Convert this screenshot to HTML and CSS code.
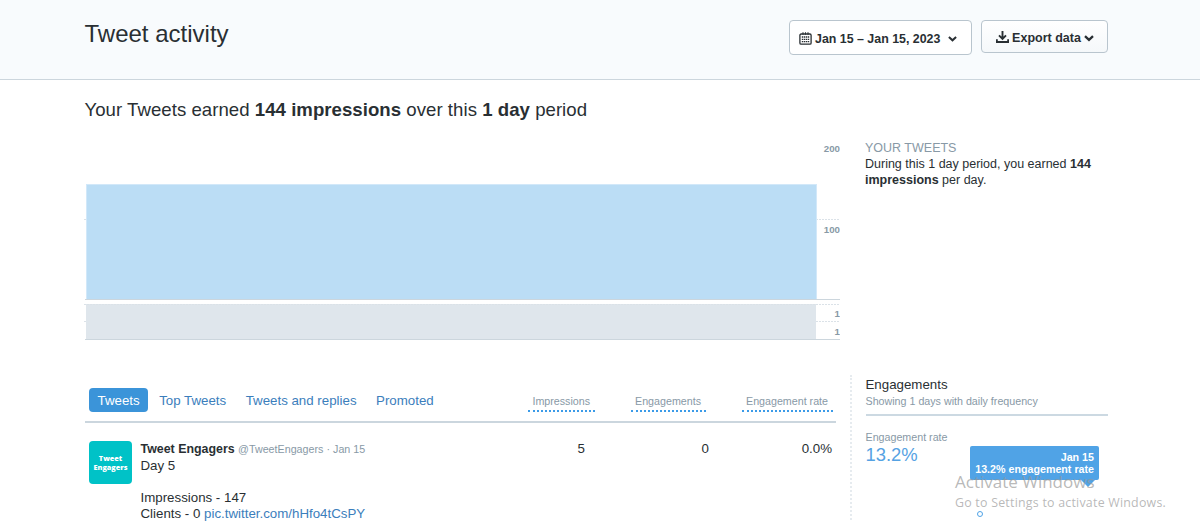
FILE: index.html
```
<!DOCTYPE html>
<html lang="en">

<head>
  <meta charset="UTF-8">
  <meta name="viewport" content="width=device-width, initial-scale=1.0">
  <title>Tweet activity</title>
  <link rel="stylesheet" href="styles.css">
</head>

<body>
  <header class="page-header">
    <div class="wrapper header-row">
      <h1>Tweet activity</h1>
      <div class="header-buttons">
        <button class="btn date-btn">
          <svg class="icon-calendar" width="13" height="13" viewBox="0 0 13 13" fill="none" stroke="#292f33">
            <rect x="0.9" y="2" width="11.2" height="10.2" rx="1.2" stroke-width="1.3" />
            <path d="M4 0.3v2.4M6.5 0.3v2.4M9 0.3v2.4" stroke-width="1.1" />
            <path d="M2.8 5h7.4M2.8 7.3h7.4M2.8 9.6h7.4" stroke-width="1.3" stroke-dasharray="1.4 0.6" />
          </svg>
          <span>Jan 15 – Jan 15, 2023</span>
          <svg class="chevron" width="9" height="6" viewBox="0 0 9 6" fill="none" stroke="#292f33" stroke-width="2">
            <path d="M0.9 1l3.6 3.3L8.1 1" />
          </svg>
        </button>
        <button class="btn export-btn">
          <svg class="icon-download" width="13" height="12" viewBox="0 0 13 12" fill="none" stroke="#292f33">
            <path d="M6.5 0v7.5M3 4.3l3.5 3.5L10 4.3" stroke-width="1.9" />
            <path d="M0.9 8.2V11h11.2V8.2" stroke-width="1.8" />
          </svg>
          <span>Export data</span>
          <svg class="chevron" width="10" height="7" viewBox="0 0 10 7" fill="none" stroke="#292f33" stroke-width="2.3">
            <path d="M1 1.2l4 3.7 4-3.7" />
          </svg>
        </button>
      </div>
    </div>
  </header>

  <main class="wrapper">
    <h2>Your Tweets earned <b>144 impressions</b> over this <b>1 day</b> period</h2>

    <section class="overview">
      <svg class="chart" width="756" height="204" viewBox="0 0 756 204">
        <!-- impressions -->
        <path class="grid-line" d="M0 82.5H756" />
        <rect x="2" y="47" width="731" height="116" fill="#d2e8f9" />
        <rect x="3" y="48" width="729" height="115" fill="#bbddf5" />
        <path class="axis-line" d="M1 162.5H756" />
        <!-- tweets -->
        <rect x="2" y="167" width="730" height="36" fill="#dfe6ec" />
        <path class="grid-line" d="M0 167.5H756M732 184.5H756M0 184.5H2" />
        <path class="axis-line" d="M1 202.5H756" />
        <g class="ticks">
          <text x="756" y="15">200</text>
          <text x="756" y="96">100</text>
          <text x="756" y="180">1</text>
          <text x="756" y="198">1</text>
        </g>
      </svg>
      <div class="overview-text">
        <h3>YOUR TWEETS</h3>
        <p>During this 1 day period, you earned <b>144 impressions</b> per day.</p>
      </div>
    </section>

    <section class="details">
      <div class="tweets">
        <div class="tweets-head">
          <nav class="tabs">
            <a class="tab active">Tweets</a>
            <a class="tab">Top Tweets</a>
            <a class="tab">Tweets and replies</a>
            <a class="tab">Promoted</a>
          </nav>
          <div class="columns">
            <span class="column">Impressions</span>
            <span class="column">Engagements</span>
            <span class="column">Engagement rate</span>
          </div>
        </div>
        <article class="tweet">
          <div class="avatar">Tweet<br>Engagers</div>
          <div class="tweet-body">
            <div class="tweet-meta"><b>Tweet Engagers</b> <span>@TweetEngagers · Jan 15</span></div>
            <p>Day 5</p>
            <p class="tweet-stats">Impressions - 147<br>Clients - 0 <a>pic.twitter.com/hHfo4tCsPY</a></p>
          </div>
          <div class="metrics">
            <span>5</span>
            <span>0</span>
            <span>0.0%</span>
          </div>
        </article>
      </div>

      <aside class="engagements">
        <h3>Engagements</h3>
        <p class="muted frequency">Showing 1 days with daily frequency</p>
        <p class="muted">Engagement rate</p>
        <div class="rate">13.2%</div>
        <span class="point"></span>
        <div class="tooltip">Jan 15<br>13.2% engagement rate</div>
      </aside>
    </section>
  </main>

  <div class="watermark">
    <div class="watermark-title">Activate Windows</div>
    <div class="watermark-text">Go to Settings to activate Windows.</div>
  </div>
</body>

</html>
```
FILE: styles.css
```
* {
  box-sizing: border-box;
}

body {
  margin: 0;
  height: 522px;
  overflow: hidden;
  position: relative;
  font-family: "Liberation Sans", Arial, sans-serif;
  color: #292f33;
  background-color: #fff;
}

h1,
h2,
h3,
p {
  margin: 0;
  font-weight: normal;
}

.wrapper {
  width: 1024px;
  margin-left: 84px;
}

.page-header {
  height: 80px;
  background-color: #f8fbfd;
  border-bottom: 1px solid #ccd6dd;
}

.header-row {
  display: flex;
  justify-content: space-between;
  align-items: flex-start;
  padding-top: 20px;
}

h1 {
  padding-left: 0.5px;
  font-size: 24px;
  line-height: 28px;
}

.header-buttons {
  display: flex;
  align-items: flex-start;
  gap: 9px;
}

.btn {
  display: flex;
  align-items: center;
  padding: 0;
  border: 1px solid #b9c5ce;
  border-radius: 4px;
  font-family: inherit;
  font-size: 12.4px;
  font-weight: bold;
  color: #292f33;
}

.date-btn {
  width: 183px;
  height: 35px;
  padding: 3px 0 0 9px;
  background-color: #fff;
}

.date-btn .icon-calendar {
  margin-top: -2px;
}

.date-btn span {
  margin: 0 8px 0 3px;
}

.export-btn {
  width: 127px;
  height: 33px;
  padding: 3px 0 0 1px;
  justify-content: center;
  gap: 3px;
  font-size: 12.5px;
  background: linear-gradient(#fff, #f5f8fa);
}

.export-btn .icon-download {
  margin-top: -2px;
}

h2 {
  padding: 19px 0 0 0.5px;
  font-size: 18.6px;
  line-height: 22px;
  letter-spacing: 0.04px;
}

.overview {
  display: flex;
  gap: 25px;
  padding-top: 16px;
  height: 254px;
}

.chart {
  flex: none;
}

.grid-line {
  stroke: #dbe2e8;
  stroke-dasharray: 2 1;
}

.axis-line {
  stroke: #ccd6dd;
}

.ticks text {
  font-size: 9.7px;
  font-weight: bold;
  fill: #8899a6;
  text-anchor: end;
}

.overview-text {
  width: 240px;
  padding-top: 3px;
  font-size: 12.5px;
  line-height: 16px;
}

.overview-text h3 {
  font-size: 12.5px;
  color: #8899a6;
}

.details {
  display: flex;
  height: 145px;
}

.tweets {
  width: 768px;
  padding: 0 14px 0 1px;
  border-right: 2px dotted #e6ebef;
}

.tweets-head {
  display: flex;
  justify-content: space-between;
  height: 48px;
  padding: 13px 3.5px 0 4px;
  border-bottom: 2px solid #cbd6de;
}

.tabs {
  display: flex;
  gap: 2.5px;
}

.tab {
  height: 24px;
  padding: 0 8.5px;
  font-size: 13.3px;
  line-height: 25px;
  border-radius: 4px;
  color: #3b7ebc;
}

.tab.active {
  background-color: #3b94d9;
  color: #fff;
}

.columns {
  display: flex;
  align-items: flex-start;
  gap: 36px;
  padding-top: 6px;
}

.column {
  height: 18px;
  padding: 0 4.5px;
  font-size: 10.7px;
  line-height: 14px;
  color: #8899a6;
  border-bottom: 2px dotted #3b9be8;
}

.tweet {
  display: flex;
  padding: 18px 4px 0 4px;
  font-size: 13.3px;
  line-height: 16px;
}

.avatar {
  width: 43px;
  height: 43px;
  padding-top: 13px;
  border-radius: 4px;
  background-color: #00c2c7;
  color: #fff;
  font-family: "Open Sans", sans-serif;
  font-size: 7.3px;
  font-weight: 800;
  line-height: 8.5px;
  text-align: center;
}

.tweet-body {
  width: 350px;
  padding-left: 8.5px;
}

.tweet-meta {
  font-size: 12.4px;
  line-height: 17px;
}

.tweet-meta span {
  font-size: 10.7px;
  letter-spacing: 0.02px;
  color: #8899a6;
}

.tweet-stats {
  padding-top: 16px;
}

.tweet-body a {
  color: #3b7ebc;
}

.metrics {
  flex: 1;
  display: grid;
  grid-template-columns: 103px 124px 1fr;
  text-align: right;
}

.engagements {
  position: relative;
  width: 256px;
  padding: 1px 0 0 13.5px;
}

.engagements h3 {
  font-size: 13.3px;
  line-height: 18px;
}

.muted {
  font-size: 10.7px;
  line-height: 14px;
  color: #8899a6;
}

.frequency {
  height: 22px;
  line-height: 15px;
  margin-bottom: 14px;
  border-bottom: 2px solid #ccd9e2;
}

.rate {
  font-size: 18.4px;
  line-height: 22px;
  color: #55a2e3;
}

.tooltip {
  position: absolute;
  top: 71px;
  right: 9px;
  width: 129px;
  height: 34px;
  padding: 5px 5px 0 0;
  border-radius: 2px;
  background-color: #50a3e6;
  color: #fff;
  font-size: 10.7px;
  font-weight: bold;
  line-height: 12px;
  text-align: right;
  white-space: nowrap;
}

.tooltip::after {
  content: "";
  position: absolute;
  top: 34px;
  right: 4px;
  border: 7px solid transparent;
  border-top-color: #50a3e6;
  border-bottom: 0;
}

.point {
  position: absolute;
  top: 136px;
  left: 125px;
  width: 6px;
  height: 6px;
  border: 1px solid #50a3e6;
  border-radius: 50%;
}

/* system overlay in the corner of the screen */
.watermark {
  position: absolute;
  left: 955px;
  top: 470px;
  font-family: "Open Sans", "Noto Sans", sans-serif;
  color: rgba(150, 150, 150, 0.68);
  white-space: nowrap;
}

.watermark-title {
  font-size: 17px;
  line-height: 24px;
}

.watermark-text {
  font-size: 12.4px;
  line-height: 17px;
  letter-spacing: 0.23px;
}
```
